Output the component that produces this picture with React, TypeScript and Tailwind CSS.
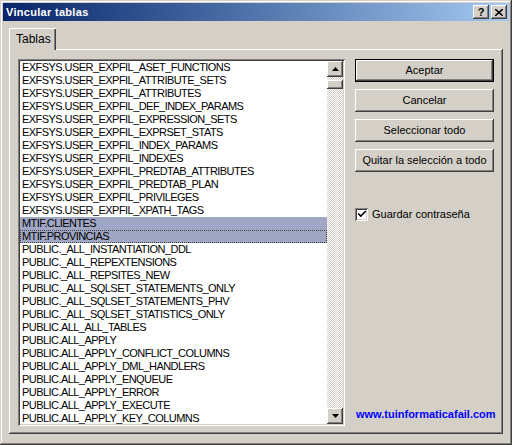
import { Check } from "lucide-react";

const tables = [
  "EXFSYS.USER_EXPFIL_ASET_FUNCTIONS",
  "EXFSYS.USER_EXPFIL_ATTRIBUTE_SETS",
  "EXFSYS.USER_EXPFIL_ATTRIBUTES",
  "EXFSYS.USER_EXPFIL_DEF_INDEX_PARAMS",
  "EXFSYS.USER_EXPFIL_EXPRESSION_SETS",
  "EXFSYS.USER_EXPFIL_EXPRSET_STATS",
  "EXFSYS.USER_EXPFIL_INDEX_PARAMS",
  "EXFSYS.USER_EXPFIL_INDEXES",
  "EXFSYS.USER_EXPFIL_PREDTAB_ATTRIBUTES",
  "EXFSYS.USER_EXPFIL_PREDTAB_PLAN",
  "EXFSYS.USER_EXPFIL_PRIVILEGES",
  "EXFSYS.USER_EXPFIL_XPATH_TAGS",
  "MTIF.CLIENTES",
  "MTIF.PROVINCIAS",
  "PUBLIC._ALL_INSTANTIATION_DDL",
  "PUBLIC._ALL_REPEXTENSIONS",
  "PUBLIC._ALL_REPSITES_NEW",
  "PUBLIC._ALL_SQLSET_STATEMENTS_ONLY",
  "PUBLIC._ALL_SQLSET_STATEMENTS_PHV",
  "PUBLIC._ALL_SQLSET_STATISTICS_ONLY",
  "PUBLIC.ALL_ALL_TABLES",
  "PUBLIC.ALL_APPLY",
  "PUBLIC.ALL_APPLY_CONFLICT_COLUMNS",
  "PUBLIC.ALL_APPLY_DML_HANDLERS",
  "PUBLIC.ALL_APPLY_ENQUEUE",
  "PUBLIC.ALL_APPLY_ERROR",
  "PUBLIC.ALL_APPLY_EXECUTE",
  "PUBLIC.ALL_APPLY_KEY_COLUMNS",
];

const selected = ["MTIF.CLIENTES", "MTIF.PROVINCIAS"];

// classic 3d borders, drawn as inset shadows so they don't move the layout
const raised =
  "shadow-[inset_-1px_-1px_#404040,inset_1px_1px_#ffffff,inset_-2px_-2px_#808080,inset_2px_2px_#d4d0c8]";
const sunken =
  "shadow-[inset_1px_1px_#808080,inset_-1px_-1px_#ffffff,inset_2px_2px_#404040,inset_-2px_-2px_#d4d0c8]";
const checker =
  "bg-[conic-gradient(#d4d0c8_25%,#ffffff_0_50%,#d4d0c8_0_75%,#ffffff_0)] bg-size-[2px_2px]";

function ClassicButton({ label, isDefault }: { label: string; isDefault?: boolean }) {
  return (
    <button
      className={`h-[23px] w-[139px] bg-[#d4d0c8] text-[11px] text-black ${
        isDefault
          ? "shadow-[inset_0_0_0_1px_#000000,inset_-2px_-2px_#404040,inset_2px_2px_#ffffff,inset_-3px_-3px_#808080]"
          : raised
      }`}
    >
      {label}
    </button>
  );
}

function TitleButton({ children }: { children: React.ReactNode }) {
  return (
    <div
      className={`flex h-[14px] w-[16px] items-center justify-center bg-[#d4d0c8] text-[11px] font-bold leading-none text-black ${raised}`}
    >
      {children}
    </div>
  );
}

function ScrollArrow({ up }: { up?: boolean }) {
  return (
    <div className={`flex h-[16px] w-[16px] items-center justify-center bg-[#d4d0c8] ${raised}`}>
      <svg width="7" height="4" viewBox="0 0 7 4">
        <path d={up ? "M3.5 0 L7 4 L0 4 Z" : "M0 0 L7 0 L3.5 4 Z"} fill="#000" />
      </svg>
    </div>
  );
}

export default function App() {
  return (
    <div
      className="flex h-[445px] w-[512px] flex-col bg-[#d4d0c8] p-[3px] shadow-[inset_-1px_-1px_#404040,inset_1px_1px_#d4d0c8,inset_-2px_-2px_#808080,inset_2px_2px_#ffffff]"
      style={{ fontFamily: '"Liberation Sans", Arial, sans-serif' }}
    >
      {/* title bar */}
      <div className="flex h-[18px] items-center bg-gradient-to-r from-[#0a246a] to-[#a6caf0] pl-[3px] pr-[2px]">
        <span className="text-[11px] font-bold tracking-[0.3px] text-white">Vincular tablas</span>
        <div className="ml-auto flex gap-[2px]">
          <TitleButton>?</TitleButton>
          <TitleButton>
            <svg width="8" height="7" viewBox="0 0 8 7">
              <path d="M0 0 L8 7 M8 0 L0 7" stroke="#000" strokeWidth="1.6" />
            </svg>
          </TitleButton>
        </div>
      </div>

      <div className="flex flex-1 flex-col px-[6px] pb-[8px] pt-[7px]">
        {/* tab */}
        <div className="flex h-[21px]">
          <div className="relative z-10 flex h-[22px] w-[47px] items-center bg-[#d4d0c8] pl-[7px] text-[12px] text-black shadow-[inset_1px_1px_#ffffff,inset_-1px_0_#404040,inset_-2px_0_#808080]">
            Tablas
          </div>
        </div>

        {/* tab panel */}
        <div className={`flex flex-1 gap-[10px] bg-[#d4d0c8] pl-[9px] pt-[10px] ${raised}`}>
          {/* list box */}
          <div className={`flex h-[367px] w-[327px] bg-white p-[2px] ${sunken}`}>
            <div className="flex-1 overflow-hidden">
              {tables.map((t, i) => (
                <div
                  key={t}
                  className={`h-[13px] whitespace-nowrap pl-[2px] text-[11px] leading-[13px] tracking-[-0.55px] text-black ${
                    selected.includes(t) ? "bg-[#a0a7c5]" : ""
                  } ${i === 13 ? "outline outline-1 -outline-offset-1 outline-dotted outline-[#404040]" : ""}`}
                >
                  {t}
                </div>
              ))}
            </div>
            <div className={`flex w-[16px] flex-col ${checker}`}>
              <ScrollArrow up />
              <div className={`mt-[3px] h-[9px] w-[16px] bg-[#d4d0c8] ${raised}`} />
              <div className="flex-1" />
              <ScrollArrow />
            </div>
          </div>

          {/* right column */}
          <div className="flex w-[139px] flex-col">
            <div className="flex flex-col gap-[7px]">
              <ClassicButton label="Aceptar" isDefault />
              <ClassicButton label="Cancelar" />
              <ClassicButton label="Seleccionar todo" />
              <ClassicButton label="Quitar la selección a todo" />
            </div>
            <label className="mt-[34px] flex items-center gap-[4px] text-[11px] text-black">
              <span className={`flex h-[13px] w-[13px] items-center justify-center bg-white ${sunken}`}>
                <Check size={10} strokeWidth={4} color="#000" />
              </span>
              Guardar contraseña
            </label>
            <div className="mt-auto mb-[12px] pl-[1px] text-[11px] font-bold text-[#0000ff]">
              www.tuinformaticafail.com
            </div>
          </div>
        </div>
      </div>
    </div>
  );
}
